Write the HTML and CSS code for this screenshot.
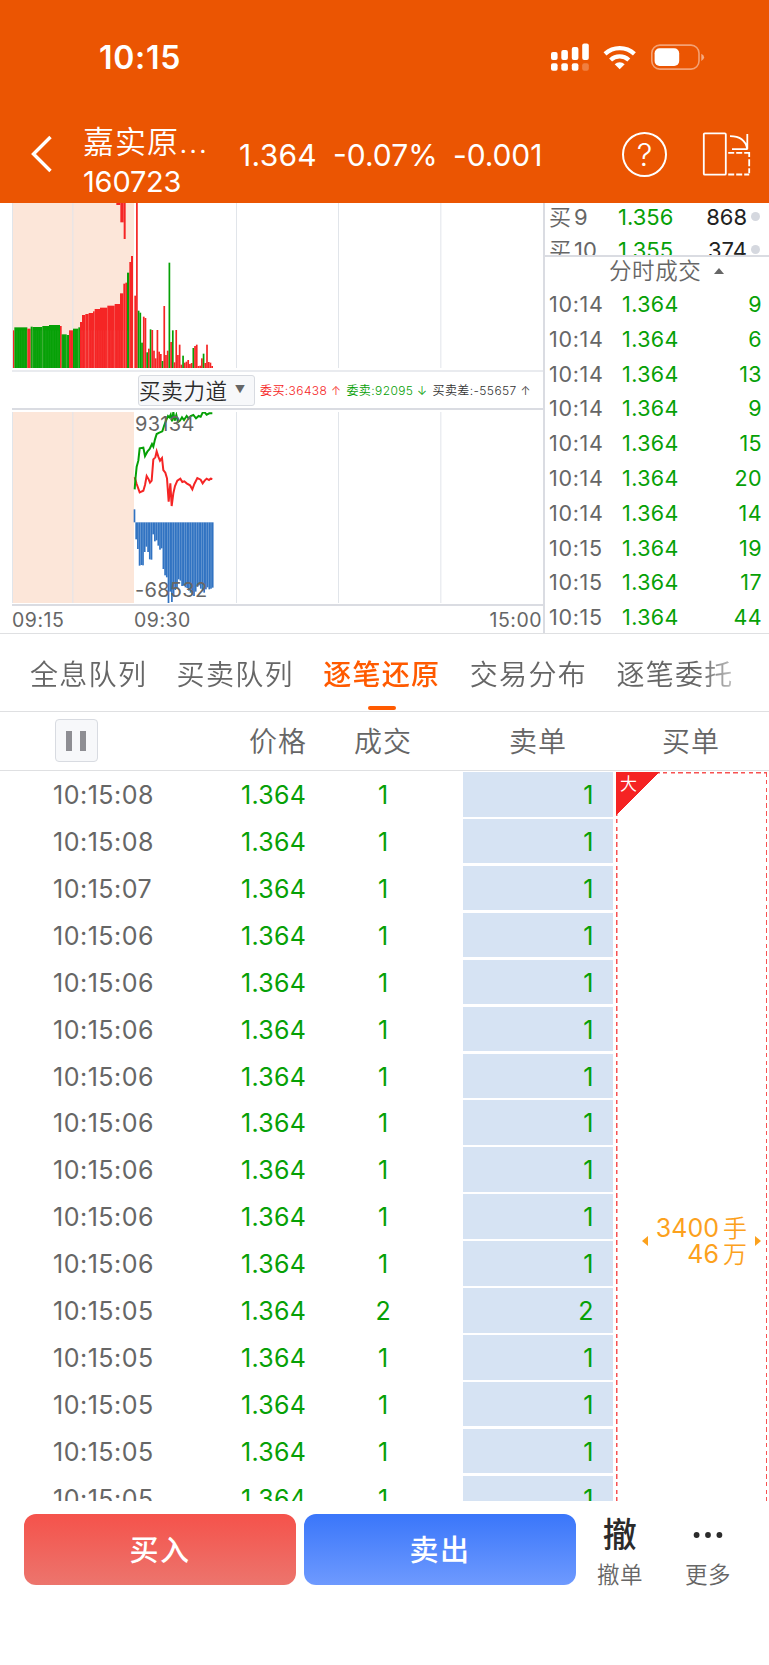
FILE: index.html
```html
<!DOCTYPE html>
<html lang="zh-CN">
<head>
    <meta charset="UTF-8">
    <meta name="viewport" content="width=device-width, initial-scale=1.0">
    <title>嘉实原油 160723</title>
    <link rel="stylesheet" href="styles.css">
</head>
<body>
    <header class="header">
        <div class="status">
            <span class="status-time">10:15</span>
            <svg class="status-icons" width="156" height="32" viewBox="549 41 156 32">
                <g fill="#fff">
                    <rect x="551" y="52" width="6.6" height="8" rx="2"/>
                    <rect x="561.3" y="50" width="6.6" height="10" rx="2"/>
                    <rect x="571.8" y="47" width="6.6" height="13" rx="2"/>
                    <rect x="582.2" y="43.6" width="6.6" height="16.4" rx="2"/>
                    <rect x="551" y="63.2" width="6.6" height="7.6" rx="2"/>
                    <rect x="561.3" y="63.2" width="6.6" height="7.6" rx="2"/>
                    <rect x="571.8" y="63.2" width="6.6" height="7.6" rx="2"/>
                    <rect x="582.2" y="63.2" width="6.6" height="7.6" rx="2" opacity="0.25"/>
                    <path d="M619.7 69.2l-5-4.9a7.4 7.4 0 0 1 10 0z"/>
                    <rect x="654.6" y="48.3" width="24.6" height="17.6" rx="5"/>
                    <path d="M701.3 53.7q2.8 1 2.8 3.6t-2.8 3.6z" opacity="0.5"/>
                </g>
                <g fill="none" stroke="#fff" stroke-width="4.3">
                    <path d="M605 53.8a21.8 21.8 0 0 1 29.4 0"/>
                    <path d="M610.6 60a13.4 13.4 0 0 1 18.2 0"/>
                </g>
                <rect x="651.8" y="45.1" width="47.2" height="24" rx="8" fill="none" stroke="#fff" stroke-width="1.6" opacity="0.45"/>
            </svg>
        </div>
        <div class="nav">
            <svg class="back" width="24" height="40" viewBox="0 0 24 40">
                <path d="M20.5 3L3.5 20l17 17" fill="none" stroke="#fff" stroke-width="3.4"/>
            </svg>
            <div class="stock">
                <div class="stock-name">嘉实原...</div>
                <div class="stock-code">160723</div>
            </div>
            <div class="quote">
                <span class="q-price">1.364</span>
                <span class="q-pct">-0.07%</span>
                <span class="q-diff">-0.001</span>
            </div>
            <div class="help">?</div>
            <svg class="rotate" width="50" height="46" viewBox="702 131 50 46">
                <g fill="none" stroke="#fff" stroke-width="1.8">
                    <rect x="703.8" y="133.3" width="22" height="41.4" rx="1"/>
                    <path d="M730 136.2c9 0 15.5 4 17.2 12.6M747.3 134v15.2M732 149.2h15.6"/>
                    <path d="M728.2 152.8h21M728.2 174.5h21" stroke-dasharray="6 2"/>
                    <path d="M749.2 152v23" stroke-dasharray="5 2.2 7 2"/>
                </g>
            </svg>
        </div>
    </header>

    <section class="market">
        <div class="charts">
            <svg class="chart" id="volume" width="532" height="165" viewBox="36 9 1596 495"></svg>
            <div class="indicator">
                <div class="select">买卖力道<span class="caret">▼</span></div>
                <div class="legend">
                    <span class="red">委买:36438 ↑</span>
                    <span class="green">委卖:92095 ↓</span>
                    <span>买卖差:-55657 ↑</span>
                </div>
            </div>
            <div class="power">
                <span class="label-max">93134</span>
                <span class="label-min">-68532</span>
                <svg class="chart" id="power" width="532" height="191" viewBox="36 36 1596 573"></svg>
            </div>
            <div class="axis">
                <span class="axis-first">09:15</span>
                <span>09:30</span>
                <span class="axis-last">15:00</span>
            </div>
        </div>
        <div class="side">
            <div class="bids">
                <div class="bid"><span>买<i>9</i></span><span class="green">1.356</span><b>868</b></div>
                <div class="bid"><span>买<i>10</i></span><span class="green">1.355</span><b>374</b></div>
            </div>
            <div class="side-title">分时成交<span class="up"></span></div>
            <div id="ticks"></div>
        </div>
    </section>

    <nav class="tabs">
        <span>全息队列</span>
        <span>买卖队列</span>
        <span class="active">逐笔还原</span>
        <span>交易分布</span>
        <span>逐笔委托</span>
    </nav>

    <div class="thead">
        <div class="pause"></div>
        <span class="th-price">价格</span>
        <span class="th-vol">成交</span>
        <span class="th-sell">卖单</span>
        <span class="th-buy">买单</span>
    </div>

    <section class="orders">
        <div class="rows" id="rows"></div>
        <div class="buy-order">
            <div class="tag"><span>大</span></div>
            <div class="amount">
                <span class="arrow-left"></span>
                <div class="amount-text">3400<em>手</em><br>46<em>万</em></div>
                <span class="arrow-right"></span>
            </div>
        </div>
    </section>

    <footer class="footer">
        <div class="btn btn-buy">买入</div>
        <div class="btn btn-sell">卖出</div>
        <div class="tool"><div class="tool-icon">撤</div>撤单</div>
        <div class="tool">
            <div class="tool-icon">
                <svg width="30" height="8" viewBox="0 0 30 8"><g fill="#2b2b2b"><circle cx="3.6" cy="4" r="2.9"/><circle cx="15" cy="4" r="2.9"/><circle cx="26.4" cy="4" r="2.9"/></g></svg>
            </div>更多
        </div>
    </footer>
    <script src="script.js"></script>
</body>
</html>
```
FILE: styles.css
```css
* {
    box-sizing: border-box;
}
body {
    margin: 0;
    width: 769px;
    height: 1665px;
    overflow: hidden;
    background: #fff;
    color: #666;
    font-family: Inter, "Noto Sans CJK SC", sans-serif;
    white-space: nowrap;
}
svg {
    display: block;
}
i, em {
    font-style: normal;
}
.red {
    color: #f52525;
}
.green {
    color: #06a006;
}

/* header */
.header {
    height: 203px;
    background: #eb5502;
    color: #fff;
}
.status {
    height: 105px;
    padding: 41px 64px 0 99px;
    display: flex;
    justify-content: space-between;
}
.status-time {
    font-size: 32px;
    font-weight: 600;
    line-height: 34px;
    letter-spacing: 0.7px;
}
.nav {
    display: flex;
    height: 98px;
    padding-left: 30px;
}
.back {
    margin-top: 29px;
}
.stock {
    width: 156px;
    margin-left: 29px;
}
.stock-name {
    height: 60px;
    padding-top: 16px;
    font-size: 31px;
    font-weight: 350;
    line-height: 42px;
    letter-spacing: 1px;
}
.stock-code {
    font-size: 29px;
    line-height: 34px;
    letter-spacing: -0.2px;
}
.quote {
    display: flex;
    width: 383px;
    padding-top: 31px;
    font-size: 30px;
    line-height: 38px;
}
.q-price {
    width: 94px;
    letter-spacing: 0.3px;
}
.q-pct {
    width: 120px;
}
.q-diff {
    letter-spacing: -0.1px;
}
.help {
    width: 45px;
    height: 45px;
    margin-top: 27px;
    border: 2px solid #fff;
    border-radius: 50%;
    font-size: 31px;
    font-weight: 300;
    line-height: 41px;
    text-align: center;
}
.rotate {
    margin: 26px 0 0 35px;
}

/* charts and tick list */
.market {
    display: flex;
    height: 431px;
    border-bottom: 1px solid #dfe0e2;
}
.charts {
    width: 543px;
    padding-left: 12px;
}
.indicator {
    display: flex;
    align-items: center;
    height: 40px;
    margin-top: 2px;
    padding-left: 126px;
    border-top: 2px solid #e9ebef;
    border-bottom: 2px solid #dadce2;
}
.select {
    display: flex;
    align-items: center;
    width: 117px;
    height: 31px;
    padding-bottom: 2px;
    border: 1px solid #d8dbe1;
    border-radius: 3px;
    background: #f7f8fa;
    color: #2b2b2b;
    font-size: 21.5px;
    font-weight: 350;
    letter-spacing: 0.7px;
}
.caret {
    margin-left: 7px;
    color: #666;
    font-size: 10.5px;
}
.legend {
    display: flex;
    gap: 5px;
    margin-left: 5px;
    padding-bottom: 2px;
    color: #333;
    font-size: 12px;
    font-weight: 350;
    letter-spacing: 0.4px;
}
.power {
    position: relative;
    padding-top: 2px;
}
.label-max, .label-min {
    position: absolute;
    left: 123px;
    z-index: 1;
    font-size: 20px;
    line-height: 24px;
    letter-spacing: 0.3px;
}
.label-max {
    top: 2px;
}
.label-min {
    top: 168px;
}
.axis {
    display: flex;
    height: 29px;
    margin-top: 1px;
    border-top: 2px solid #dadce2;
    font-size: 19.5px;
    line-height: 29px;
    letter-spacing: 0.5px;
}
.axis-first {
    width: 122px;
}
.axis-last {
    margin-left: auto;
    padding-right: 1px;
}
.side {
    width: 226px;
    border-left: 2px solid #dadce2;
}
.bids {
    height: 54px;
    overflow: hidden;
    border-bottom: 2px solid #dadce2;
}
.bid {
    display: grid;
    grid-template-columns: 69px 1fr 60px 22px;
    height: 33px;
    padding-left: 4px;
    font-size: 22px;
    font-weight: 350;
    line-height: 29px;
}
.bid .green, .tick .green {
    font-weight: 400;
}
.bid i {
    margin-left: 3px;
    font-weight: 400;
}
.bid b {
    color: #222;
    font-weight: 400;
    text-align: right;
}
.bid::after {
    content: "";
    width: 9px;
    height: 9px;
    margin: 9px 0 0 4px;
    border-radius: 50%;
    background: #d5d8df;
}
.side-title {
    display: flex;
    align-items: center;
    height: 30px;
    padding: 0 0 3px 64px;
    font-size: 22.5px;
    font-weight: 350;
    letter-spacing: 0.6px;
    line-height: 27px;
}
.up {
    margin-left: 13px;
    border: 5px solid transparent;
    border-top: 0;
    border-bottom: 6px solid #666;
}
.tick {
    display: grid;
    grid-template-columns: 73px 1fr 60px;
    height: 34.8px;
    padding: 0 7px 0 4px;
    font-size: 21.5px;
    line-height: 35px;
    letter-spacing: 0.4px;
}
.tick span:first-child {
    letter-spacing: 0.7px;
}
.tick span:last-child {
    text-align: right;
}

/* tabs */
.tabs {
    display: flex;
    gap: 29.4px;
    height: 78px;
    padding-left: 30px;
    overflow: hidden;
    border-bottom: 1px solid #dfe0e2;
    font-size: 28px;
    font-weight: 350;
    line-height: 82px;
    letter-spacing: 1.3px;
    -webkit-mask-image: linear-gradient(#000, #000), linear-gradient(90deg, #000 700px, transparent 755px);
    -webkit-mask-size: 100% 1px, 100% 100%;
    -webkit-mask-position: 0 100%, 0 0;
    -webkit-mask-repeat: no-repeat;
}
.active {
    display: flex;
    flex-direction: column;
    align-items: center;
    color: #ff5a00;
    font-weight: 500;
}
.active::after {
    content: "";
    flex-shrink: 0;
    width: 28px;
    height: 4px;
    margin-top: -10px;
    border-radius: 2px;
    background: #ff5a00;
}

/* order table */
.thead {
    display: flex;
    height: 59px;
    padding-left: 55px;
    border-bottom: 1px solid #dfe0e2;
    font-size: 28px;
    font-weight: 350;
    line-height: 60px;
    letter-spacing: 1px;
}
.pause {
    display: flex;
    justify-content: center;
    align-items: center;
    gap: 8px;
    width: 43px;
    height: 43px;
    margin-top: 7px;
    padding-right: 1px;
    border: 1px solid #d8dbe1;
    border-radius: 4px;
    background: #f7f8fa;
}
.pause::before, .pause::after {
    content: "";
    width: 6px;
    height: 20px;
    background: #8e8e93;
}
.th-price {
    width: 105px;
    margin-left: 151px;
}
.th-vol {
    width: 155px;
}
.th-sell {
    width: 153px;
}
.orders {
    display: flex;
    height: 730px;
    padding-top: 1px;
    overflow: hidden;
}
.rows {
    width: 616px;
}
.row {
    display: grid;
    grid-template-columns: 188px 104px 60px 1fr 150px;
    height: 46.93px;
    padding: 0 3.5px 0 53px;
    font-size: 25px;
    line-height: 46px;
}
.row .time {
    letter-spacing: 0.5px;
}
.row .price {
    letter-spacing: 0.3px;
}
.row .vol {
    width: 60px;
    margin-left: 8px;
    text-align: center;
}
.row .sell {
    grid-column: 5;
    height: 44.5px;
    padding-right: 19px;
    background: #d6e3f3;
    text-align: right;
}
.buy-order {
    width: 151px;
    height: 1200px;
    background:
        repeating-linear-gradient(90deg, #f75252 0 4.5px, transparent 4.5px 7.8px) 0 0 / 100% 1.5px no-repeat,
        repeating-linear-gradient(#f75252 0 4.5px, transparent 4.5px 7.8px) 0 0 / 1.5px 100% no-repeat,
        repeating-linear-gradient(#f75252 0 4.5px, transparent 4.5px 7.8px) 100% 0 / 1.5px 100% no-repeat;
}
.tag {
    width: 44px;
    height: 44px;
    padding: 1px 0 0 4px;
    background: linear-gradient(135deg, #f52323 50%, transparent 50%);
    color: #fff;
    font-size: 17px;
    font-weight: 350;
    line-height: 22px;
}
.amount {
    display: flex;
    justify-content: flex-end;
    align-items: center;
    margin-top: 398px;
    padding-right: 6px;
    color: #fca11d;
    font-size: 25px;
    line-height: 25.5px;
    text-align: right;
}
.amount-text {
    padding-top: 2px;
}
.amount em {
    margin-left: 4px;
    font-size: 24px;
    font-weight: 350;
}
.arrow-left, .arrow-right {
    border: 5px solid transparent;
}
.arrow-left {
    margin-right: 8px;
    border-left: 0;
    border-right: 6px solid #fca11d;
}
.arrow-right {
    margin-left: 8px;
    border-right: 0;
    border-left: 6px solid #fca11d;
}

/* footer */
.footer {
    display: flex;
    height: 164px;
    padding: 13px 0 0 24px;
    background: #fff;
}
.btn {
    width: 272px;
    height: 71px;
    margin-right: 8px;
    border-radius: 12px;
    color: #fff;
    font-size: 29px;
    font-weight: 500;
    line-height: 73px;
    letter-spacing: 1.5px;
    text-align: center;
}
.btn-buy {
    background: linear-gradient(#f5524b, #ec756d);
}
.btn-sell {
    background: linear-gradient(#3a76fa, #6e9afe);
}
.tool {
    width: 88px;
    font-size: 22.5px;
    font-weight: 350;
    line-height: 33px;
    letter-spacing: 0.4px;
    text-align: center;
}
.btn-sell + .tool {
    margin-left: -8px;
}
.tool-icon {
    display: flex;
    justify-content: center;
    align-items: center;
    height: 41px;
    margin-bottom: 3px;
    color: #2b2b2b;
    font-size: 34px;
    font-weight: 500;
}
```
FILE: script.js
```js
const RED = '#f52525';
const GREEN = '#06a006';
const BLUE = '#3173c2';
const STEP = 5.13;

// call auction: [from, to, top, colour]
const auction = [
    [39, 43, 391, 'r'], [43, 82, 382, 'g'], [82, 92, 386, 'r'], [92, 98, 380, 'g'],
    [98, 127, 381, 'g'], [127, 147, 378, 'g'], [147, 180, 375, 'g'], [180, 185, 378, 'r'],
    [185, 200, 403, 'g'], [200, 207, 405, 'g'], [207, 219, 391, 'r'], [219, 235, 386, 'g'],
    [235, 240, 382, 'g'], [240, 246, 366, 'r'], [246, 256, 345, 'r'], [256, 266, 342, 'r'],
    [266, 279, 339, 'r'], [279, 284, 334, 'r'], [284, 300, 327, 'r'], [300, 322, 323, 'r'],
    [322, 344, 317, 'r'], [344, 360, 312, 'r'], [360, 370, 280, 'r'], [370, 376, 251, 'r'],
    [376, 381, 248, 'r'], [381, 388, 218, 'g'], [388, 393, 186, 'r'], [393, 399, 168, 'r']
];

// one bar a minute from 09:30
const minutes = ('r287 r9 g332 g338 g428 r350 r354 g457 r446 g388 r390 r452 r475 r390 r455 r462 ' +
    'g483 r318 r465 r452 g188 r426 g391 r487 r390 r465 r434 r494 g467 r488 r485 r480 r492 r489 ' +
    'g444 r438 r434 r498 r497 r475 g461 r489 r434 r486 r488 r498').split(' ');

const diffs = [418, 447, 497, 495, 496, 456, 440, 456, 478, 479, 403, 424, 421, 437, 449, 445,
    507, 526, 532, 609, 575, 606, 590, 570, 562, 538, 542, 558, 557, 562, 564, 572, 578, 583,
    588, 575, 560, 556, 566, 572, 578, 568, 562, 568, 566, 563];

const sellLine = '404,268 406,240 410,200 415,182 419,145 430,143 435,168 442,155 449,147 456,132 ' +
    '460,140 465,118 470,102 478,98 487,94 492,78 498,62 504,48 508,52 512,44 516,64 520,36 ' +
    '524,62 529,45 534,66 540,62 546,52 552,60 560,48 566,56 572,48 580,45 588,55 596,48 ' +
    '602,50 608,38 614,37 620,44 628,40 637,40';
const buyLine = '404,232 410,252 419,277 430,272 435,255 440,228 446,238 450,248 455,242 460,178 ' +
    '466,172 470,154 475,170 480,182 486,174 490,210 496,218 501,235 506,305 511,250 515,318 ' +
    '520,280 525,258 532,242 541,236 547,246 553,244 560,250 570,256 577,268 583,252 592,234 ' +
    '602,239 608,250 614,242 620,236 627,240 632,236 637,237';

function rect(x, y, w, h, fill) {
    return `<rect x="${x}" y="${y}" width="${w}" height="${h}" fill="${fill}"/>`;
}

function grid(y, h) {
    let out = rect(36, y, 366, h, '#fce6d9');
    [36, 217, 708, 1014, 1321].forEach(x => {
        out += rect(x, y, 3, h, '#e1e5ea');
    });
    return out;
}

function drawVolume() {
    let out = grid(9, 495);
    out += rect(349, 9, 12, 6, RED) + rect(361, 9, 10, 58, RED) + rect(371, 9, 6, 108, RED);
    auction.forEach(([from, to, top, c]) => {
        out += rect(from, top, to - from, 504 - top, c === 'r' ? RED : GREEN);
    });
    // thin seams between neighbouring bars
    for (let x = 43; x < 399; x += STEP) {
        out += `<rect x="${x}" y="391" width="0.8" height="113" fill="#fff" opacity="0.15"/>`;
    }
    minutes.forEach((m, i) => {
        const top = Number(m.slice(1));
        out += rect(403 + i * STEP, top, STEP, 504 - top, m[0] === 'r' ? RED : GREEN);
    });
    document.getElementById('volume').innerHTML = out;
}

function drawPower() {
    let out = grid(36, 573);
    out += rect(401, 328, 5, 39, BLUE);
    diffs.forEach((bottom, i) => {
        out += rect(406 + i * 5.1, 367, 5.15, bottom - 367, BLUE);
    });
    out += `<polyline points="${buyLine}" fill="none" stroke="${RED}" stroke-width="6"/>`;
    out += `<polyline points="${sellLine}" fill="none" stroke="${GREEN}" stroke-width="6"/>`;
    document.getElementById('power').innerHTML = out;
}

function renderTicks() {
    const volumes = [9, 6, 13, 9, 15, 20, 14, 19, 17, 44];
    document.getElementById('ticks').innerHTML = volumes.map((v, i) =>
        `<div class="tick"><span>${i < 7 ? '10:14' : '10:15'}</span><span class="green">1.364</span><span class="green">${v}</span></div>`
    ).join('');
}

function renderRows() {
    const seconds = ['08', '08', '07', '06', '06', '06', '06', '06', '06', '06', '06', '05', '05', '05', '05', '05'];
    document.getElementById('rows').innerHTML = seconds.map((s, i) => {
        const v = i === 11 ? 2 : 1;
        return `<div class="row"><span class="time">10:15:${s}</span><span class="price green">1.364</span>` +
            `<span class="vol green">${v}</span><span class="sell green">${v}</span></div>`;
    }).join('');
}

drawVolume();
drawPower();
renderTicks();
renderRows();
```
